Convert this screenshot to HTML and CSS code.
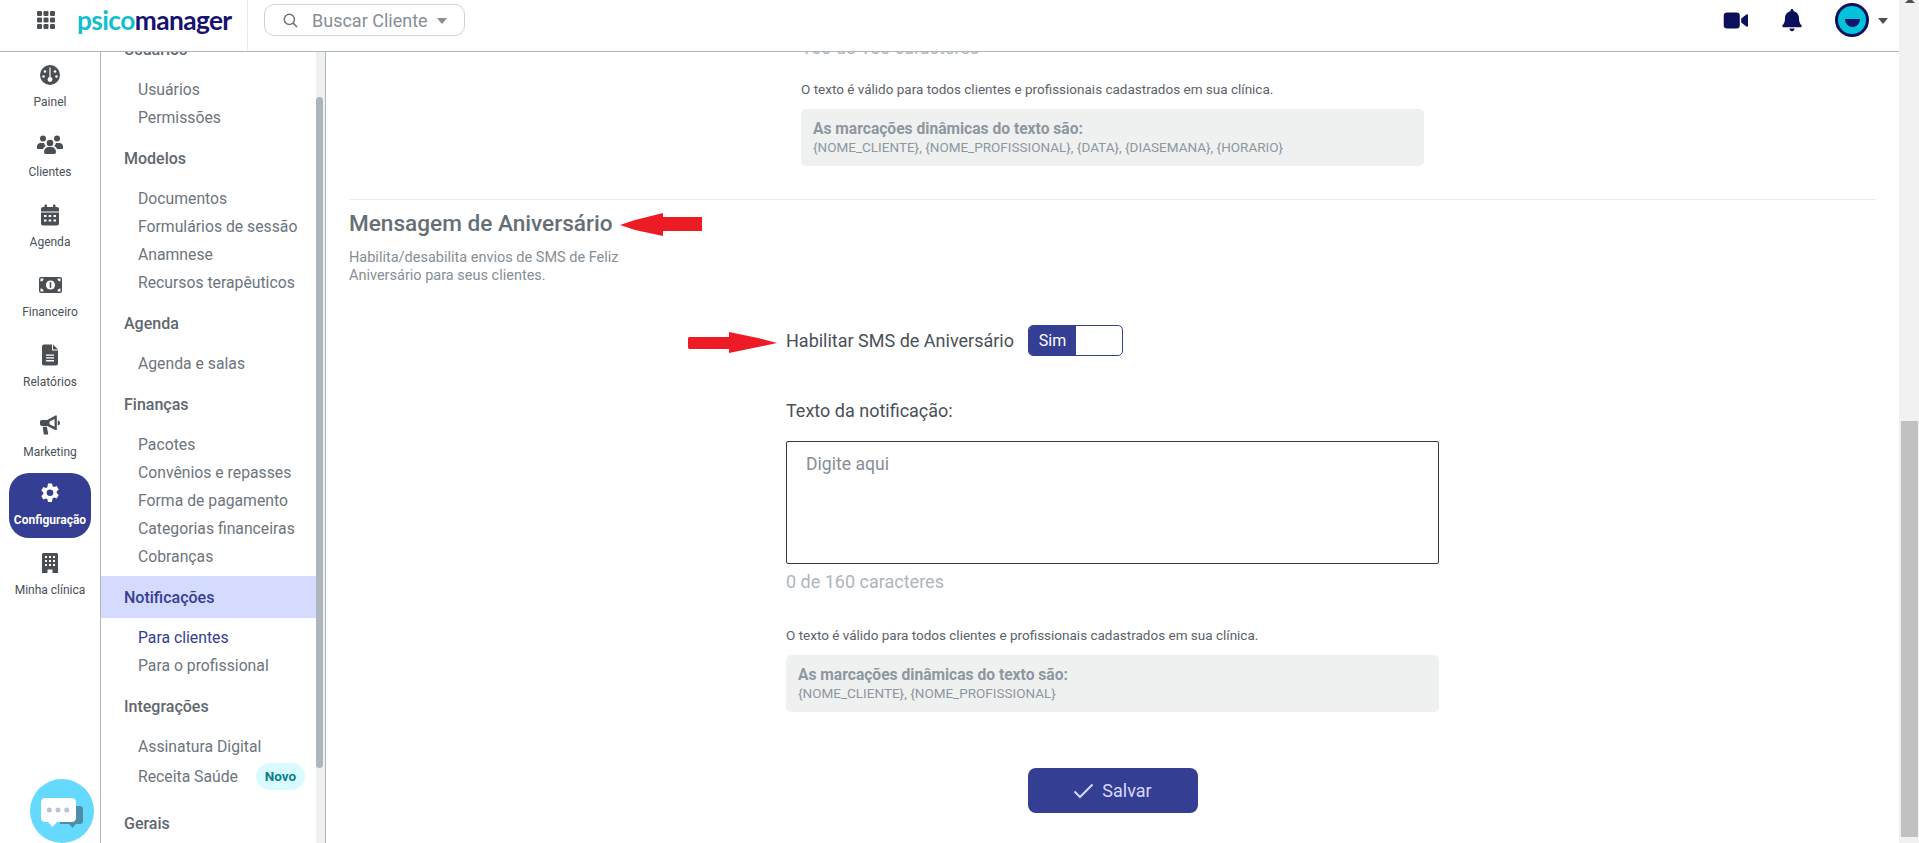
FILE: index.html
```html
<!DOCTYPE html>
<html lang="pt-BR">

<head>
    <meta charset="utf-8">
    <title>PsicoManager</title>
    <link rel="stylesheet" href="styles.css">
</head>

<body>

    <div class="page">
        <header class="top">
            <div class="apps">
                <svg width="18" height="18" viewBox="0 0 18 18" fill="#4a4f54">
                    <rect x="0" y="0" width="5" height="5" rx="1.2"/><rect x="6.5" y="0" width="5" height="5" rx="1.2"/><rect x="13" y="0" width="5" height="5" rx="1.2"/>
                    <rect x="0" y="6.5" width="5" height="5" rx="1.2"/><rect x="6.5" y="6.5" width="5" height="5" rx="1.2"/><rect x="13" y="6.5" width="5" height="5" rx="1.2"/>
                    <rect x="0" y="13" width="5" height="5" rx="1.2"/><rect x="6.5" y="13" width="5" height="5" rx="1.2"/><rect x="13" y="13" width="5" height="5" rx="1.2"/>
                </svg>
            </div>
            <div class="logo"><span class="logo-a">psico</span><span class="logo-b">manager</span></div>
            <div class="search-wrap">
                <div class="search">
                    <svg width="15" height="15" viewBox="0 0 16 16" fill="none" stroke="#6c757d" stroke-width="1.6">
                        <circle cx="6.8" cy="6.8" r="5.4"/><path d="M10.8 10.8 15 15"/>
                    </svg>
                    <span>Buscar Cliente</span>
                    <i class="caret"></i>
                </div>
            </div>
            <div class="top-right">
                <svg width="26" height="17" viewBox="0 0 26 18" fill="#0b0f5c">
                    <rect x="0" y="0.500" width="17" height="17" rx="3.500"/><path d="M18.500 7 24 2.600c.8-.6 1.700-.2 1.700.8v11.200c0 1-.9 1.400-1.700.8L18.500 11z"/>
                </svg>
                <svg class="bell" width="20" height="23" viewBox="0 0 20 23" fill="#0b0f5c">
                    <path d="M10 0c-.9 0-1.500.7-1.500 1.500v.7C5 2.900 3 5.700 3 9c0 4.500-1.300 6-2.500 7.300-.7.800-.2 1.900.9 1.900h17.200c1.100 0 1.600-1.100.9-1.900C18.300 15 17 13.500 17 9c0-3.300-2-6.100-5.500-6.800v-.7C11.500.7 10.900 0 10 0z"/>
                    <path d="M7.500 19.500h5c0 1.500-1.100 2.700-2.500 2.700s-2.500-1.200-2.500-2.700z"/>
                </svg>
                <div class="avatar"><i></i></div>
                <i class="caret dark"></i>
            </div>
        </header>

        <div class="main">
            <nav class="rail">
                <a class="rail-item">
                    <svg width="20" height="20" viewBox="0 0 20 20"><circle cx="10" cy="10" r="10" fill="#4a4f54"/><g fill="#fff"><rect x="9.400" y="2.500" width="1.200" height="10"/><circle cx="10" cy="14.500" r="2.400"/><circle cx="5" cy="6.500" r="1.300"/><circle cx="15" cy="6.500" r="1.300"/><circle cx="3.500" cy="11.500" r="1.300"/><circle cx="16.500" cy="11.500" r="1.300"/></g></svg>
                    <span>Painel</span>
                </a>
                <a class="rail-item">
                    <svg width="26" height="20" viewBox="0 0 26 20" fill="#4a4f54"><circle cx="6" cy="3.500" r="3"/><circle cx="20" cy="3.500" r="3"/><circle cx="13" cy="8" r="3.300"/><path d="M0 11.500c0-2 1.500-3.500 3.500-3.500h3.500c.3 1.200 1 2.200 1.800 2.900C7.300 11.700 6.200 13 6 14H1c-.6 0-1-.4-1-1z"/><path d="M26 11.500c0-2-1.500-3.500-3.500-3.500H19c-.3 1.200-1 2.200-1.800 2.900 1.500.8 2.600 2.100 2.800 3.100h5c.6 0 1-.4 1-1z"/><path d="M7 17c0-3 2-5 4.500-5h3c2.500 0 4.500 2 4.500 5 0 1-.6 2-1.600 2H8.600C7.600 19 7 18 7 17z"/></svg>
                    <span>Clientes</span>
                </a>
                <a class="rail-item">
                    <svg width="18" height="21" viewBox="0 0 18 21" fill="#4a4f54"><rect x="3.500" y="0" width="2.500" height="4" rx="1"/><rect x="12" y="0" width="2.500" height="4" rx="1"/><path d="M0 4.500C0 3.400.9 2.500 2 2.500h14c1.100 0 2 .9 2 2V7H0z"/><path fill-rule="evenodd" d="M0 8h18v11c0 1.100-.9 2-2 2H2c-1.100 0-2-.9-2-2zm3 2.500v2h2.500v-2zm4.700 0v2h2.500v-2zm4.800 0v2H15v-2zM3 15v2h2.500v-2zm4.700 0v2h2.500v-2zm4.800 0v2H15v-2z"/></svg>
                    <span>Agenda</span>
                </a>
                <a class="rail-item">
                    <svg width="23" height="16" viewBox="0 0 23 16"><rect width="23" height="16" rx="2" fill="#4a4f54"/><circle cx="11.500" cy="8" r="4.600" fill="#fff"/><rect x="10.700" y="5.200" width="1.600" height="5.600" fill="#4a4f54"/><path d="M1.500 4.500a3 3 0 0 0 3-3h-3z M21.500 4.500a3 3 0 0 1-3-3h3z M1.500 11.500a3 3 0 0 1 3 3h-3z M21.500 11.500a3 3 0 0 0-3 3h3z" fill="#fff"/></svg>
                    <span>Financeiro</span>
                </a>
                <a class="rail-item">
                    <svg width="16" height="20" viewBox="0 0 16 21" fill="#4a4f54"><path d="M2 0h8v5.500c0 .3.200.5.500.5H16v13c0 1.100-.9 2-2 2H2c-1.100 0-2-.9-2-2V2C0 .9.900 0 2 0z"/><path d="M11 0l5 5h-5z"/><path d="M4 10h8v1.300H4zM4 12.800h8v1.300H4zM4 15.600h8v1.300H4z" fill="#fff"/></svg>
                    <span>Relatórios</span>
                </a>
                <a class="rail-item">
                    <svg width="20" height="20" viewBox="0 0 22 21" fill="#4a4f54"><path d="M0 7c0-1.100.9-2 2-2h6l9-5h1.500v16H17l-9-4.500H2c-1.100 0-2-.9-2-2z"/><path d="M3 12.500h4.500L9 20c0 .5-.5 1-1 1H5c-.5 0-1-.4-1-1z"/><path d="M19.500 5.500c1.500 0 2.500 1.200 2.500 2.700s-1 2.800-2.500 2.800z"/><path d="M10.500 6.700 16 3.800v8.600l-5.500-2.700z" fill="#fff"/></svg>
                    <span>Marketing</span>
                </a>
                <a class="rail-item active">
                    <svg width="20" height="20" viewBox="0 0 20 20"><path fill="#fff" fill-rule="evenodd" d="M8 .5h4l.6 2.700 1.500.8 2.600-.9 2 3.500-2 1.800v1.700l2 1.800-2 3.500-2.600-.9-1.500.8L12 19H8l-.6-2.700-1.500-.8-2.600.9-2-3.500 2-1.800V9.400l-2-1.800 2-3.500 2.600.9 1.500-.8zM10 6.500a3.300 3.300 0 1 0 0 6.600 3.300 3.300 0 0 0 0-6.600z"/></svg>
                    <span>Configuração</span>
                </a>
                <a class="rail-item">
                    <svg width="16" height="20" viewBox="0 0 16 20" fill="#4a4f54"><path fill-rule="evenodd" d="M1.500 0h13c.8 0 1.500.7 1.500 1.500V20h-5.500v-3.500h-5V20H0V1.500C0 .7.700 0 1.500 0zM3 3v2h2V3zm4 0v2h2V3zm4 0v2h2V3zM3 7v2h2V7zm4 0v2h2V7zm4 0v2h2V7zm-8 4v2h2v-2zm4 0v2h2v-2zm4 0v2h2v-2z"/></svg>
                    <span>Minha clínica</span>
                </a>
                <div class="chat">
                    <svg width="42" height="31" viewBox="0 0 42 31">
                        <path d="M19 8h20c1.700 0 3 1.300 3 3v12c0 1.700-1.300 3-3 3h-4l-3.500 4-3.500-4H19z" fill="#4d8ea6"/>
                        <path d="M15 24h15l-1-2V8H15z" fill="#4d8ea6"/>
                        <path d="M4 0h27c2.200 0 4 1.800 4 4v16c0 2.200-1.800 4-4 4H16l-4.500 5L7 24H4c-2.200 0-4-1.800-4-4V4c0-2.200 1.800-4 4-4z" fill="#fff"/>
                        <circle cx="8.300" cy="12" r="2.500" fill="#b9c3d6"/><circle cx="17" cy="12" r="2.500" fill="#b9c3d6"/><circle cx="25.700" cy="12" r="2.500" fill="#b9c3d6"/>
                    </svg>
                </div>
            </nav>

            <aside class="menu">
                <div class="menu-scroll">
                    <h4 class="menu-title">Usuários</h4>
                    <a class="menu-link">Usuários</a>
                    <a class="menu-link">Permissões</a>
                    <h4 class="menu-title">Modelos</h4>
                    <a class="menu-link">Documentos</a>
                    <a class="menu-link">Formulários de sessão</a>
                    <a class="menu-link">Anamnese</a>
                    <a class="menu-link">Recursos terapêuticos</a>
                    <h4 class="menu-title">Agenda</h4>
                    <a class="menu-link">Agenda e salas</a>
                    <h4 class="menu-title">Finanças</h4>
                    <a class="menu-link">Pacotes</a>
                    <a class="menu-link">Convênios e repasses</a>
                    <a class="menu-link">Forma de pagamento</a>
                    <a class="menu-link">Categorias financeiras</a>
                    <a class="menu-link">Cobranças</a>
                    <h4 class="menu-title selected">Notificações</h4>
                    <a class="menu-link current">Para clientes</a>
                    <a class="menu-link">Para o profissional</a>
                    <h4 class="menu-title">Integrações</h4>
                    <a class="menu-link">Assinatura Digital</a>
                    <a class="menu-link badge-row">Receita Saúde <b class="badge">Novo</b></a>
                    <h4 class="menu-title">Gerais</h4>
                </div>
                <div class="menu-bar"><div class="menu-thumb"></div></div>
            </aside>

            <main class="content">
                <div class="first-block">
                    <div class="clipped-count">160 de 160 caracteres</div>
                    <p class="valid">O texto é válido para todos clientes e profissionais cadastrados em sua clínica.</p>
                    <div class="tags">
                        <strong>As marcações dinâmicas do texto são:</strong>
                        <span>{NOME_CLIENTE}, {NOME_PROFISSIONAL}, {DATA}, {DIASEMANA}, {HORARIO}</span>
                    </div>
                </div>

                <hr class="line">

                <h3 class="section-title">Mensagem de Aniversário
                    <svg class="arrow-left" width="82" height="23" viewBox="0 0 82 23"><path d="M0 12 15 7 43 0v4h39v14H43v5L15 17z" fill="#ed1c24"/></svg>
                </h3>
                <p class="section-sub">Habilita/desabilita envios de SMS de Feliz<br>Aniversário para seus clientes.</p>

                <div class="form">
                    <div class="switch-row">
                        <svg class="arrow-right" width="89" height="21" viewBox="0 0 89 21"><path d="M89 11 70 15 41 21v-4H1l-1-1V6l1-1h40V0l29 6z" fill="#ed1c24"/></svg>
                        <label>Habilitar SMS de Aniversário</label>
                        <div class="switch"><span>Sim</span></div>
                    </div>

                    <label class="text-label">Texto da notificação:</label>
                    <div class="textarea">Digite aqui</div>
                    <div class="count">0 de 160 caracteres</div>

                    <p class="valid second">O texto é válido para todos clientes e profissionais cadastrados em sua clínica.</p>
                    <div class="tags">
                        <strong>As marcações dinâmicas do texto são:</strong>
                        <span>{NOME_CLIENTE}, {NOME_PROFISSIONAL}</span>
                    </div>

                    <div class="actions">
                        <button class="save">
                            <svg width="21" height="16" viewBox="0 0 21 16" fill="none" stroke="#d5d9ff" stroke-width="2"><path d="M1.500 8.500 7 14 19.500 1.500"/></svg>
                            Salvar
                        </button>
                    </div>
                </div>
            </main>
        </div>
    </div>

    <div class="page-bar">
        <i class="page-arrow"></i>
        <div class="page-thumb"></div>
    </div>

</body>

</html>
```
FILE: styles.css
```css
* {
    box-sizing: border-box;
}

html,
body {
    height: 100%;
    margin: 0;
    overflow: hidden;
}

body {
    font-family: Roboto, "Liberation Sans", sans-serif;
    color: #495057;
    background-color: #fff;
    display: flex;
}

.page {
    flex: 1;
    min-width: 0;
    display: flex;
    flex-direction: column;
}

/* Top bar */
.top {
    height: 52px;
    flex: none;
    display: flex;
    align-items: flex-start;
    border-bottom: 1px solid #adb5bd;
    background-color: #fff;
    position: relative;
    z-index: 2;
}

.apps {
    width: 77px;
    padding: 11px 0 0 37px;
    display: flex;
}

.logo {
    width: 170px;
    height: 40px;
    display: flex;
    align-items: center;
    font-family: Lato, Roboto, sans-serif;
    font-weight: 700;
    font-size: 26.300px;
    letter-spacing: -0.6px;
}

.logo-a {
    color: #12bfcf;
}

.logo-b {
    color: #171172;
}

.search-wrap {
    height: 51px;
    padding: 4px 0 0 16px;
    border-left: 1px solid #e9ecef;
    display: flex;
    align-items: flex-start;
}

.search {
    width: 201px;
    height: 32px;
    border: 1px solid #ced4da;
    border-radius: 10px;
    padding-left: 18px;
    display: flex;
    align-items: center;
    gap: 14px;
    font-size: 18px;
    color: #868e96;
}

.caret {
    width: 0;
    height: 0;
    border-left: 5px solid transparent;
    border-right: 5px solid transparent;
    border-top: 6px solid #868e96;
    margin-left: -5px;
    margin-top: 2px;
}

.caret.dark {
    border-top-color: #495057;
    margin: 1px 0 0 9px;
}

.top-right {
    margin-left: auto;
    width: 176px;
    height: 40px;
    display: flex;
    align-items: center;
}

.bell {
    margin-left: 33px;
}

.avatar {
    width: 34px;
    height: 34px;
    margin-left: 33px;
    border-radius: 50%;
    background-color: #00c3d9;
    border: 3px solid #0b0f5c;
    display: flex;
    justify-content: center;
    padding-top: 13px;
}

.avatar i {
    width: 15px;
    height: 8px;
    background-color: #171172;
    border-radius: 0 0 8px 8px;
}

.main {
    flex: 1;
    min-height: 0;
    display: flex;
}

/* Left icon rail */
.rail {
    width: 101px;
    flex: none;
    border-right: 1px solid #adb5bd;
    padding: 7px 9px 0;
    position: relative;
    display: flex;
    flex-direction: column;
    align-items: center;
}

.rail-item {
    width: 82px;
    height: 70px;
    flex: none;
    display: flex;
    flex-direction: column;
    align-items: center;
    padding-top: 4px;
    font-size: 12px;
    color: #495057;
}

.rail-item svg {
    height: 24px;
    flex: none;
}

.rail-item span {
    margin-top: 7px;
    line-height: 16px;
    white-space: nowrap;
}

.rail-item.active {
    height: 65px;
    padding-top: 8px;
    border-radius: 20px;
    background-color: #343e92;
    color: #fff;
    font-size: 12px;
    font-weight: 700;
    margin-top: -6px;
    margin-bottom: 9px;
}

.chat {
    position: absolute;
    left: 30px;
    top: 727px;
    width: 64px;
    height: 64px;
    border-radius: 50%;
    background-color: #66d9ff;
    padding: 19px 0 0 11px;
}

.chat svg {
    display: block;
}

/* Settings menu */
.menu {
    width: 225px;
    flex: none;
    display: flex;
    border-right: 1px solid #adb5bd;
    overflow: hidden;
}

.menu-scroll {
    width: 215px;
    flex: none;
    margin-top: -24px;
}

.menu-title {
    margin: 0;
    height: 42px;
    padding: 0 23px;
    display: flex;
    align-items: center;
    font-size: 16px;
    font-weight: 500;
    color: #5f676e;
}

.menu-title.selected {
    background-color: #d5daff;
    color: #343e92;
}

.menu-link {
    display: flex;
    align-items: center;
    height: 28px;
    padding-left: 37px;
    font-size: 15.750px;
    color: #6c757d;
}

.menu-title + .menu-link {
    margin-top: 5px;
}

.menu-link + .menu-title {
    margin-top: 6px;
}

.menu-link.current {
    color: #343e92;
}

.menu-link.badge-row {
    height: 32px;
    margin-bottom: 10px;
}

.badge {
    margin-left: 18px;
    width: 49px;
    height: 27px;
    border-radius: 14px;
    background-color: #d9fbff;
    color: #0a7f8c;
    font-size: 13.500px;
    font-weight: 700;
    display: flex;
    align-items: center;
    justify-content: center;
}

.menu-bar {
    width: 9px;
    background-color: #eff1f1;
}

.menu-thumb {
    margin-top: 45px;
    margin-right: 2px;
    height: 671px;
    border-radius: 4px;
    background-color: #adb5bd;
}

/* Content */
.content {
    flex: 1;
    min-width: 0;
    padding: 0 23px;
}

.first-block {
    margin-left: 452px;
    width: 623px;
    padding-top: 29px;
    position: relative;
}

.clipped-count {
    position: absolute;
    left: 0;
    top: -15px;
    font-size: 18px;
    line-height: 22px;
    color: #adb5bd;
}

.valid {
    margin: 0;
    font-size: 13.500px;
    line-height: 16px;
    color: #5b6268;
}

.tags {
    margin-top: 12px;
    height: 57px;
    border-radius: 5px;
    background-color: #eff1f1;
    padding: 11px 12px;
    display: flex;
    flex-direction: column;
    color: #8d979f;
}

.tags strong {
    font-size: 15.600px;
    line-height: 19px;
    font-weight: 700;
}

.tags span {
    font-size: 13.500px;
    line-height: 16px;
}

.line {
    margin: 33px 0 0;
    border: 0;
    border-top: 1px solid #e9ecef;
}

.section-title {
    margin: 11px 0 0;
    font-size: 22.600px;
    line-height: 26px;
    font-weight: 500;
    color: #666e75;
    display: flex;
    align-items: center;
}

.arrow-left {
    margin-left: 7px;
}

.section-sub {
    margin: 12px 0 0;
    font-size: 14.500px;
    line-height: 18px;
    color: #868e96;
}

.form {
    margin-left: 437px;
    width: 653px;
    padding-top: 40px;
}

.switch-row {
    display: flex;
    align-items: center;
    position: relative;
    font-size: 18px;
    color: #495057;
}

.arrow-right {
    position: absolute;
    left: -98px;
    top: 7px;
}

.switch {
    margin-left: 14px;
    width: 95px;
    height: 31px;
    border: 1px solid #343e92;
    border-radius: 5px;
    overflow: hidden;
}

.switch span {
    display: flex;
    width: 47px;
    height: 100%;
    align-items: center;
    justify-content: center;
    background-color: #343e92;
    color: #fff;
    font-size: 16px;
}

.text-label {
    display: block;
    margin-top: 44px;
    font-size: 18px;
    line-height: 22px;
    color: #495057;
}

.textarea {
    margin-top: 19px;
    height: 123px;
    border: 1px solid #343a40;
    border-radius: 2px;
    padding: 11px 19px;
    font-size: 17.600px;
    line-height: 22px;
    color: #868e96;
}

.count {
    margin-top: 7px;
    font-size: 18px;
    line-height: 22px;
    color: #adb5bd;
}

.valid.second {
    margin-top: 34px;
}

.actions {
    display: flex;
    justify-content: center;
    padding-top: 56px;
}

.save {
    width: 170px;
    height: 45px;
    border: 0;
    border-radius: 8px;
    background-color: #343e92;
    color: #d5d9ff;
    font-family: inherit;
    font-size: 18px;
    display: flex;
    align-items: center;
    justify-content: center;
    gap: 8px;
}

/* Page scrollbar */
.page-bar {
    width: 20px;
    flex: none;
    background-color: #f1f1f1;
    position: relative;
}

.page-arrow {
    position: absolute;
    left: 6px;
    top: -2px;
    width: 0;
    height: 0;
    border-left: 5px solid transparent;
    border-right: 5px solid transparent;
    border-bottom: 5px solid #505050;
}

.page-thumb {
    position: absolute;
    left: 2px;
    right: 1px;
    top: 421px;
    bottom: 6px;
    background-color: #c1c1c1;
}
```
